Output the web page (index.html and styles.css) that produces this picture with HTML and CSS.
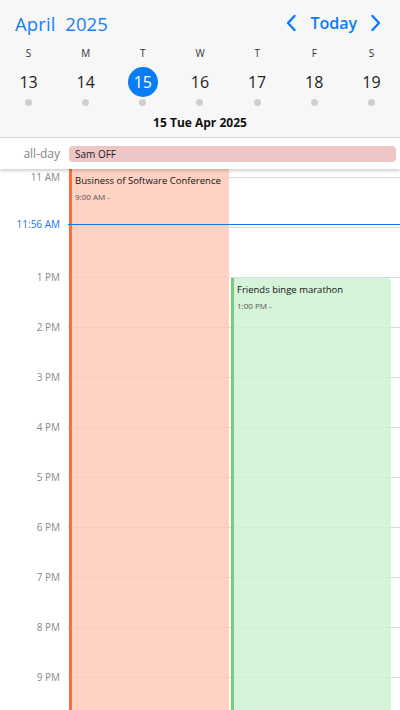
FILE: index.html
```html
<!DOCTYPE html>
<html>
<head>
<meta charset="utf-8">
<link rel="stylesheet" href="styles.css">
</head>
<body>
<div class="app">
  <header class="top">
    <div class="titlebar">
      <div class="month">April&nbsp; 2025</div>
      <div class="nav">
        <svg class="chev" width="12" height="18" viewBox="0 0 12 18"><path d="M9.5 2 L3 9 L9.5 16" fill="none" stroke="#0a7cf5" stroke-width="2.4" stroke-linecap="round" stroke-linejoin="round"/></svg>
        <span class="today">Today</span>
        <svg class="chev" width="12" height="18" viewBox="0 0 12 18"><path d="M2.5 2 L9 9 L2.5 16" fill="none" stroke="#0a7cf5" stroke-width="2.4" stroke-linecap="round" stroke-linejoin="round"/></svg>
      </div>
    </div>
    <div class="week">
      <div class="day"><span class="wd">S</span><span class="num">13</span><span class="dot"></span></div>
      <div class="day"><span class="wd">M</span><span class="num">14</span><span class="dot"></span></div>
      <div class="day"><span class="wd">T</span><span class="num sel">15</span><span class="dot"></span></div>
      <div class="day"><span class="wd">W</span><span class="num">16</span><span class="dot"></span></div>
      <div class="day"><span class="wd">T</span><span class="num">17</span><span class="dot"></span></div>
      <div class="day"><span class="wd">F</span><span class="num">18</span><span class="dot"></span></div>
      <div class="day"><span class="wd">S</span><span class="num">19</span><span class="dot"></span></div>
    </div>
    <div class="datelabel">15 Tue Apr 2025</div>
  </header>
  <div class="allday">
    <div class="adlabel">all-day</div>
    <div class="pill">Sam OFF</div>
  </div>
  <div class="grid">
    <div class="hours">
      <div class="hour"><span class="hl">11 AM</span><span class="line"></span></div>
      <div class="hour"><span class="hl hidden">12 PM</span><span class="line"></span></div>
      <div class="hour"><span class="hl">1 PM</span><span class="line"></span></div>
      <div class="hour"><span class="hl">2 PM</span><span class="line"></span></div>
      <div class="hour"><span class="hl">3 PM</span><span class="line"></span></div>
      <div class="hour"><span class="hl">4 PM</span><span class="line"></span></div>
      <div class="hour"><span class="hl">5 PM</span><span class="line"></span></div>
      <div class="hour"><span class="hl">6 PM</span><span class="line"></span></div>
      <div class="hour"><span class="hl">7 PM</span><span class="line"></span></div>
      <div class="hour"><span class="hl">8 PM</span><span class="line"></span></div>
      <div class="hour"><span class="hl">9 PM</span><span class="line"></span></div>
    </div>
    <div class="event ev-orange">
      <div class="ev-title">Business of Software Conference</div>
      <div class="ev-time">9:00 AM -</div>
    </div>
    <div class="event ev-green">
      <div class="ev-title">Friends binge marathon</div>
      <div class="ev-time">1:00 PM -</div>
    </div>
    <div class="now">
      <span class="now-label">11:56 AM</span>
      <span class="now-line"></span>
    </div>
  </div>
</div>
</body>
</html>
```

FILE: styles.css
```css
* { box-sizing: border-box; }
html, body { margin: 0; padding: 0; }
body {
  width: 400px;
  height: 710px;
  overflow: hidden;
  background: #fff;
  font-family: "Open Sans", "Noto Sans", sans-serif;
  color: #111;
}
.app { display: flex; flex-direction: column; height: 710px; }

.top {
  background: #f7f7f7;
  border-bottom: 1px solid #d4d4d4;
  height: 138px;
  display: flex;
  flex-direction: column;
}
.titlebar {
  display: flex;
  justify-content: space-between;
  align-items: center;
  height: 44px;
  padding: 2px 18px 0 15px;
}
.month {
  font-size: 18.5px;
  color: #1580f5;
  letter-spacing: 0.1px;
}
.nav { display: flex; align-items: center; }
.chev { display: block; }
.today {
  font-size: 16px;
  font-weight: 600;
  color: #0a7cf5;
  margin: 0 13px 0 13px;
}
.week {
  display: grid;
  grid-template-columns: repeat(7, 1fr);
  margin-top: 2px;
}
.day {
  display: flex;
  flex-direction: column;
  align-items: center;
}
.wd {
  font-size: 10px;
  color: #333;
  line-height: 14px;
  height: 14px;
}
.num {
  margin-top: 7px;
  width: 30px;
  height: 30px;
  border-radius: 50%;
  display: flex;
  align-items: center;
  justify-content: center;
  font-size: 16px;
  color: #222;
}
.num.sel { background: #0a7cf5; color: #fff; }
.dot {
  margin-top: 2px;
  width: 7px;
  height: 7px;
  border-radius: 50%;
  background: #cfcfcf;
}
.datelabel {
  text-align: center;
  font-size: 12px;
  font-weight: 700;
  color: #111;
  margin-top: 8px;
}

.allday {
  height: 31px;
  display: flex;
  align-items: center;
  background: #fff;
  box-shadow: 0 2px 3px rgba(0,0,0,0.18);
  position: relative;
  z-index: 2;
}
.adlabel {
  width: 60px;
  text-align: right;
  font-size: 12px;
  color: #888;
}
.pill {
  margin-left: 9px;
  flex: 1;
  margin-right: 4px;
  height: 16px;
  border-radius: 4px;
  background: #efc6c6;
  font-size: 10px;
  line-height: 16px;
  padding-left: 6px;
  color: #222;
}

.grid {
  position: relative;
  flex: 1;
  overflow: hidden;
  padding-top: 8px;
}
.hours { display: flex; flex-direction: column; }
.hour {
  height: 50px;
  display: flex;
  align-items: flex-start;
}
.hl {
  width: 60px;
  text-align: right;
  font-size: 10px;
  line-height: 14px;
  margin-top: -7px;
  color: #8a8a8a;
}
.hl.hidden { visibility: hidden; }
.line {
  flex: 1;
  margin-left: 8px;
  border-top: 1px solid #d9d9d9;
}

.event {
  position: absolute;
  width: 160px;
  bottom: -40px;
  padding: 5px 0 0 3px;
  border-top-right-radius: 4px;
  z-index: 1;
}
.ev-orange {
  left: 69px;
  top: 0;
  background: rgba(255, 200, 182, 0.82);
  border-left: 3px solid #ff6d3f;
  border-top-right-radius: 0;
}
.ev-green {
  left: 231px;
  top: 109px;
  background: rgba(205, 242, 208, 0.82);
  border-left: 3px solid #72d275;
}
.ev-title {
  font-size: 9.5px;
  font-weight: 500;
  color: #111;
  line-height: 14px;
}
.ev-time {
  font-size: 8px;
  color: #555;
  margin-top: 3px;
}

.now {
  position: absolute;
  left: 0;
  right: 0;
  top: 48px;
  height: 14px;
  display: flex;
  align-items: center;
  z-index: 3;
}
.now-label {
  width: 60px;
  text-align: right;
  font-size: 10px;
  color: #1a73e8;
}
.now-line {
  flex: 1;
  margin-left: 8px;
  height: 0;
  border-top: 1px solid #1a73e8;
}
```
